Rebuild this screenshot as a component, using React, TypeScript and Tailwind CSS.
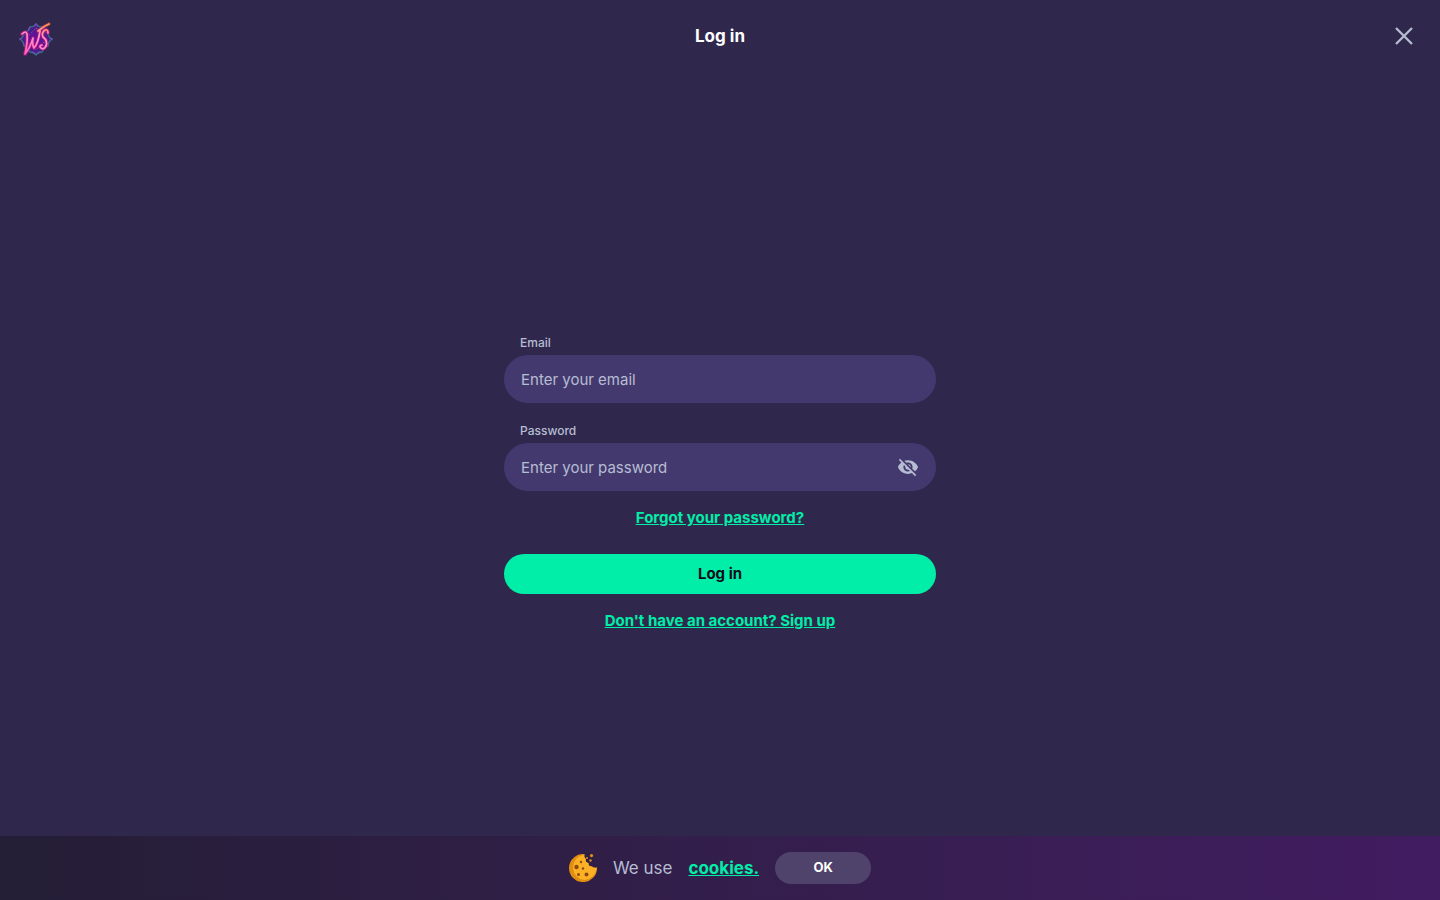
import { useState } from "react";
import { MdVisibility, MdVisibilityOff } from "react-icons/md";

const diamond =
  "M20 6 Q22 9 26 9 Q28 14 32 15 Q32 19 36 21 Q32 24 32 28 Q28 30 26 34 Q22 34 20 37 Q18 34 14 34 Q12 30 8 28 Q8 24 4 21 Q8 19 8 15 Q12 14 14 9 Q18 9 20 6Z";
const strokeW = "M6 16 Q10 12 11 16 Q12 23 9 36 Q14 30 17 20 Q16 27 18 30 Q22 26 24 13";
const strokeS = "M32 15 Q32 11 29 12 Q25 15 27 19 Q32 23 30 28 Q27 33 24 29 Q24 27 26 27";
const swash = "M22 13 Q28 8 33 6";

function Logo() {
  return (
    <svg viewBox="0 0 40 40" className="size-10" role="img" aria-label="WS">
      <defs>
        <linearGradient id="neon" gradientUnits="userSpaceOnUse" x1="8" y1="34" x2="34" y2="6">
          <stop offset="0" stopColor="#ff62b4" />
          <stop offset="0.55" stopColor="#ff9ccb" />
          <stop offset="0.85" stopColor="#ff8a78" />
          <stop offset="1" stopColor="#ffa04a" />
        </linearGradient>
      </defs>
      <path d={diamond} fill="#45208a" stroke="#2f7883" strokeWidth="1.3" />
      <path d={diamond} fill="none" stroke="#7a4bb4" strokeWidth="1.3" strokeDasharray="3 4" />
      <path d="M20 9 L32 21 L20 34 L8 21Z" fill="#5b1596" />
      <path
        d="M20 10 L31 21 L20 32 L9 21Z"
        fill="none"
        stroke="#a9824f"
        strokeDasharray="1 3"
      />
      <g fill="none" strokeLinecap="round" strokeLinejoin="round">
        <g stroke="#b3128f" strokeWidth="3.6" opacity="0.85">
          <path d={strokeW} />
          <path d={strokeS} />
        </g>
        <path d={swash} stroke="#b03a3c" strokeWidth="3.2" opacity="0.8" />
        <g stroke="url(#neon)" strokeWidth="1.7">
          <path d={strokeW} />
          <path d={strokeS} />
          <path d={swash} />
        </g>
      </g>
    </svg>
  );
}

function CookieIcon() {
  return (
    <svg viewBox="0 0 28 28" className="size-7 shrink-0" aria-hidden="true">
      <path
        d="M15.5 0.2 A14 14 0 1 0 28 13.5 Q25 14.5 23 12.5 Q19 12.5 19.5 9 Q16 8.5 16.8 5 Q14.5 3 15.5 0.2Z"
        fill="#e08d10"
      />
      <path
        d="M15.5 0.2 Q4 3 4 14 Q5 24 15 26 Q26 25 28 13.5 Q25 14.5 23 12.5 Q19 12.5 19.5 9 Q16 8.5 16.8 5 Q14.5 3 15.5 0.2Z"
        fill="#fbb026"
      />
      <g fill="#8b4a10">
        <circle cx="7.5" cy="13" r="2.2" />
        <circle cx="12" cy="8" r="1.2" />
        <circle cx="14" cy="14.5" r="1.2" />
        <circle cx="9.5" cy="20.5" r="1.5" />
        <circle cx="17.5" cy="20.5" r="2" />
      </g>
      <g fill="#e0911c">
        <circle cx="22.5" cy="1.6" r="1.6" />
        <circle cx="18" cy="4" r="1" />
        <circle cx="21.5" cy="6.5" r="1.2" />
      </g>
    </svg>
  );
}

const fieldClass =
  "h-12 w-full rounded-full bg-[#44396f] px-[17px] text-[15px] text-[#b6bdd2] placeholder:text-[#b6bdd2] placeholder:opacity-100 outline-none focus:ring-1 focus:ring-[#00eea8]";
const labelClass = "mb-1 px-4 text-xs leading-4 font-medium text-[#b6bdd2]";
const linkClass =
  "mt-[15px] self-center text-[15px] leading-6 font-bold text-[#00eea8] underline underline-offset-1";

export default function App() {
  const [visible, setVisible] = useState(false);
  const [cookiesOpen, setCookiesOpen] = useState(true);

  return (
    <div className="flex min-h-screen flex-col bg-[#30284c] font-['Inter',sans-serif]">
      <header className="grid h-[72px] grid-cols-[1fr_auto_1fr] items-center px-4">
        <a href="#home" className="mt-1 justify-self-start">
          <Logo />
        </a>
        <h1 className="text-[17px] leading-6 font-bold text-white">Log in</h1>
        <button type="button" aria-label="Close" className="justify-self-end p-2 text-[#b6bdd2]">
          <svg viewBox="0 0 24 24" className="size-6" fill="none" stroke="currentColor" strokeWidth="2.3">
            <path d="M4 4 L20 20 M20 4 L4 20" />
          </svg>
        </button>
      </header>

      <main className="flex flex-1 items-center justify-center px-4 pb-1">
        <form
          className="flex w-full max-w-[432px] flex-col"
          onSubmit={(event) => event.preventDefault()}
        >
          <label htmlFor="email" className={labelClass}>
            Email
          </label>
          <input id="email" type="email" placeholder="Enter your email" className={fieldClass} />

          <label htmlFor="password" className={`mt-5 ${labelClass}`}>
            Password
          </label>
          <div className="relative">
            <input
              id="password"
              type={visible ? "text" : "password"}
              placeholder="Enter your password"
              className={`${fieldClass} pr-12`}
            />
            <button
              type="button"
              aria-label={visible ? "Hide password" : "Show password"}
              onClick={() => setVisible(!visible)}
              className="absolute inset-y-0 right-[17px] flex items-center text-[#b6bdd2]"
            >
              {visible ? (
                <MdVisibility className="size-[22px]" />
              ) : (
                <MdVisibilityOff className="size-[22px]" />
              )}
            </button>
          </div>

          <a href="#forgot" className={linkClass}>
            Forgot your password?
          </a>
          <button
            type="submit"
            className="mt-6 h-10 rounded-full bg-[#00eea8] text-[15px] font-bold text-[#0d0b1a]"
          >
            Log in
          </button>
          <a href="#signup" className={linkClass}>
            Don't have an account? Sign up
          </a>
        </form>
      </main>

      {cookiesOpen && (
        <aside
          aria-label="Cookies"
          className="fixed inset-x-0 bottom-0 flex h-16 items-center justify-center gap-4 bg-linear-to-r from-[#241e36] to-[#421c61]"
        >
          <CookieIcon />
          <p className="flex gap-4 text-[17px] leading-6 text-[#b6bdd2]">
            <span>We use</span>
            <a href="#cookies" className="font-bold text-[#00eea8] underline underline-offset-1">
              cookies.
            </a>
          </p>
          <button
            type="button"
            onClick={() => setCookiesOpen(false)}
            className="h-8 w-24 rounded-full bg-[#4f426b] text-[13px] font-bold text-white"
          >
            OK
          </button>
        </aside>
      )}
    </div>
  );
}
